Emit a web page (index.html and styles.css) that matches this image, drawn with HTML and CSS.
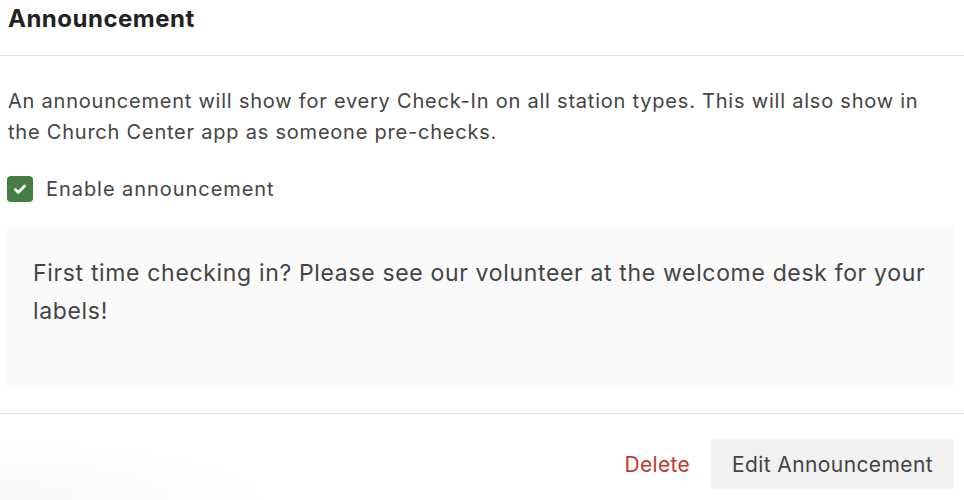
FILE: index.html
```html
<!DOCTYPE html>
<html>
<head>
<meta charset="utf-8">
<link rel="stylesheet" href="styles.css">
</head>
<body>
<div class="panel">
  <div class="header"><h2 class="title">Announcement</h2></div>
  <div class="body">
    <p class="desc">An announcement will show for every Check-In on all station types. This will also show in the Church Center app as someone pre-checks.</p>
    <label class="check">
      <span class="box"><svg width="16" height="16" viewBox="0 0 16 16"><path d="M3.4 8.4l3 3L12.6 5" fill="none" stroke="#fff" stroke-width="2.8" stroke-linecap="round" stroke-linejoin="round"/></svg></span>
      <span class="check-label">Enable announcement</span>
    </label>
    <div class="message">First time checking in? Please see our volunteer at the welcome desk for your labels!</div>
  </div>
  <div class="footer">
    <button class="btn-link">Delete</button>
    <button class="btn">Edit Announcement</button>
  </div>
</div>
</body>
</html>
```
FILE: styles.css
```css
html, body { margin: 0; padding: 0; background: #fff; }
body {
  font-family: Inter, "Noto Sans", sans-serif;
  color: #444;
  width: 964px;
  height: 500px;
  overflow: hidden;
  background: radial-gradient(ellipse 280px 60px at 0 500px, rgba(0,0,0,0.025), rgba(0,0,0,0) 100%) #fff;
}
.panel { display: flex; flex-direction: column; }
.header { height: 56px; border-bottom: 1px solid #e3e3e3; box-sizing: border-box; padding: 2px 8px 0; }
.title { margin: 0; font-size: 24px; font-weight: 700; color: #222; line-height: 33px; letter-spacing: 0.5px; }
.body { padding: 30px 10px 26px 7px; border-bottom: 1px solid #e3e3e3; }
.desc { margin: 0 0 0 1px; font-size: 20px; line-height: 31px; letter-spacing: 0.78px; }
.check { display: flex; align-items: center; gap: 13px; margin-top: 28px; }
.box { width: 26px; height: 26px; border-radius: 4px; background: #467d43; display: flex; align-items: center; justify-content: center; }
.check-label { font-size: 20px; letter-spacing: 0.95px; }
.message { margin-top: 25px; background: #fafafa; padding: 27px 26px 0; height: 160px; box-sizing: border-box; font-size: 23px; line-height: 38px; letter-spacing: 0.66px; }
.footer { display: flex; justify-content: flex-end; align-items: center; gap: 21px; padding: 25px 10px 0 0; }
.btn-link { border: none; background: none; font-family: inherit; font-size: 21px; color: #c0392b; padding: 0; letter-spacing: 0.3px; }
.btn { border: none; background: #f1f1f1; border-radius: 4px; font-family: inherit; font-size: 21px; color: #444; height: 50px; padding: 0; width: 243px; letter-spacing: 0.4px; }
```
